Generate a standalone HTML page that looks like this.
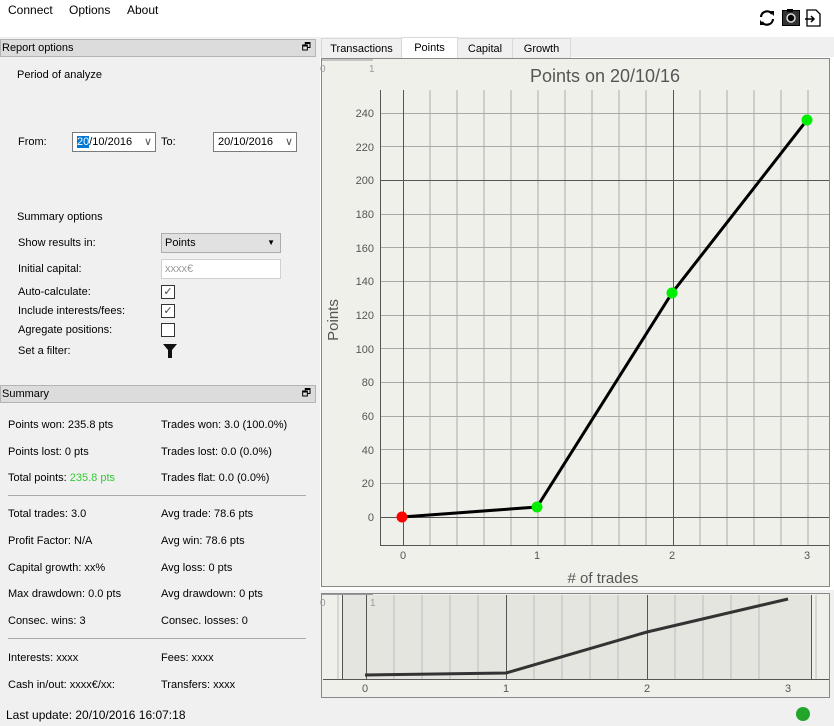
<!DOCTYPE html>
<html><head><meta charset="utf-8"><style>
body{margin:0;width:834px;height:726px;background:#f0f0f0;font-family:"Liberation Sans",sans-serif;font-size:11px;color:#000;position:relative;overflow:hidden}
.a{position:absolute;white-space:nowrap}
.menu{left:0;top:0;width:834px;height:37px;background:#fff}
.hdr{background:#dcdcdc;border:1px solid #b4b4b4;height:16px;line-height:16px;padding-left:1px;width:313px}
.box{background:#fff;border:1px solid #aaa;height:18px;line-height:18px}
.cb{width:12px;height:12px;border:1px solid #333;background:#fff}
.tab{top:38px;height:19px;line-height:20px;text-align:center;border:1px solid #d9d9d9;background:#f0f0f0}
</style></head><body>
<div class="a menu"></div>
<div class="a" style="left:8px;top:3px;font-size:12px">Connect</div>
<div class="a" style="left:69px;top:3px;font-size:12px">Options</div>
<div class="a" style="left:127px;top:3px;font-size:12px">About</div>
<svg class="a" style="left:758px;top:8px" width="70" height="20" viewBox="0 0 70 20">
<path d="M3 9a6 6 0 0 1 11-3M15 11a6 6 0 0 1-11 3" stroke="#000" stroke-width="2.2" fill="none"/>
<path d="M11 3h5v5z M7 17H2v-5z" fill="#000"/>
<rect x="24" y="2" width="18" height="16" fill="#000"/><rect x="25" y="3" width="16" height="14" fill="#333"/><circle cx="33" cy="10" r="4" fill="#000" stroke="#ddd" stroke-width="1.5"/><rect x="29" y="1" width="6" height="3" fill="#000"/>
<path d="M49 2h9l4 4v12h-13z" fill="#fff" stroke="#000" stroke-width="1.3"/><path d="M47 11h9M53 8l3 3-3 3" stroke="#000" stroke-width="1.5" fill="none"/>
</svg>

<div class="a hdr" style="left:0;top:39px">Report options<span style="position:absolute;right:4px;top:0;font-size:10px">&#x1F5D7;</span></div>
<div class="a" style="left:17px;top:69px">Period of analyze</div>
<div class="a" style="left:18px;top:136px">From:</div>
<div class="a box" style="left:72px;top:132px;width:82px;border-color:#7a7a7a"><span style="background:#0078d7;color:#fff;margin-left:4px">20</span>/10/2016<span style="position:absolute;right:3px;color:#555">&#x2228;</span></div>
<div class="a" style="left:161px;top:136px">To:</div>
<div class="a box" style="left:213px;top:132px;width:82px;border-color:#7a7a7a"><span style="margin-left:4px">20/10/2016</span><span style="position:absolute;right:3px;color:#555">&#x2228;</span></div>
<div class="a" style="left:17px;top:211px">Summary options</div>
<div class="a" style="left:18px;top:237px">Show results in:</div>
<div class="a box" style="left:161px;top:233px;width:118px;background:#e1e1e1;border-color:#adadad"><span style="margin-left:3px">Points</span><span style="position:absolute;right:5px;font-size:8px">&#x25BC;</span></div>
<div class="a" style="left:18px;top:263px">Initial capital:</div>
<div class="a box" style="left:161px;top:259px;width:118px;border-color:#d0d0d0;color:#999"><span style="margin-left:3px">xxxx€</span></div>
<div class="a" style="left:18px;top:286px">Auto-calculate:</div>
<div class="a cb" style="left:161px;top:285px;font-size:11px;line-height:12px;text-align:center;color:#444">✓</div>
<div class="a" style="left:18px;top:305px">Include interests/fees:</div>
<div class="a cb" style="left:161px;top:304px;font-size:11px;line-height:12px;text-align:center;color:#444">✓</div>
<div class="a" style="left:18px;top:324px">Agregate positions:</div>
<div class="a cb" style="left:161px;top:323px"></div>
<div class="a" style="left:18px;top:345px">Set a filter:</div>
<svg class="a" style="left:163px;top:343px" width="14" height="16"><path d="M0 1h14l-5 6v8h-4v-8z" fill="#111"/></svg>

<div class="a hdr" style="left:0;top:385px">Summary<span style="position:absolute;right:4px;top:0;font-size:10px">&#x1F5D7;</span></div>
<div class="a" style="left:8px;top:419px">Points won: 235.8 pts</div>
<div class="a" style="left:161px;top:419px">Trades won: 3.0 (100.0%)</div>
<div class="a" style="left:8px;top:446px">Points lost: 0 pts</div>
<div class="a" style="left:161px;top:446px">Trades lost: 0.0 (0.0%)</div>
<div class="a" style="left:8px;top:472px">Total points: <span style="color:#3c3">235.8 pts</span></div>
<div class="a" style="left:161px;top:472px">Trades flat: 0.0 (0.0%)</div>
<div class="a" style="left:8px;top:495px;width:298px;height:1px;background:#aaa"></div>
<div class="a" style="left:8px;top:508px">Total trades: 3.0</div>
<div class="a" style="left:161px;top:508px">Avg trade: 78.6 pts</div>
<div class="a" style="left:8px;top:535px">Profit Factor: N/A</div>
<div class="a" style="left:161px;top:535px">Avg win: 78.6 pts</div>
<div class="a" style="left:8px;top:562px">Capital growth: xx%</div>
<div class="a" style="left:161px;top:562px">Avg loss: 0 pts</div>
<div class="a" style="left:8px;top:588px">Max drawdown: 0.0 pts</div>
<div class="a" style="left:161px;top:588px">Avg drawdown: 0 pts</div>
<div class="a" style="left:8px;top:615px">Consec. wins: 3</div>
<div class="a" style="left:161px;top:615px">Consec. losses: 0</div>
<div class="a" style="left:8px;top:638px;width:298px;height:1px;background:#aaa"></div>
<div class="a" style="left:8px;top:652px">Interests: xxxx</div>
<div class="a" style="left:161px;top:652px">Fees: xxxx</div>
<div class="a" style="left:8px;top:679px">Cash in/out: xxxx€/xx:</div>
<div class="a" style="left:161px;top:679px">Transfers: xxxx</div>
<div class="a" style="left:6px;top:708px;font-size:12px">Last update: 20/10/2016 16:07:18</div>
<div class="a" style="left:796px;top:707px;width:14px;height:14px;border-radius:50%;background:#22a52a"></div>

<div class="a" style="left:320px;top:57px;width:514px;height:533px;background:#fff"></div>
<div class="a tab" style="left:321px;width:79px">Transactions</div>
<div class="a tab" style="left:401px;top:37px;height:21px;width:55px;background:#fff;border-bottom:none">Points</div>
<div class="a tab" style="left:457px;width:54px">Capital</div>
<div class="a tab" style="left:512px;width:57px">Growth</div>

<svg class="a" style="left:0;top:0" width="834" height="726" font-family="Liberation Sans,sans-serif">
<rect x="321.5" y="58.5" width="508" height="528" fill="#f0f0eb" stroke="#888"/>
<text x="320" y="72" font-size="10" fill="#999">0</text><text x="369" y="72" font-size="10" fill="#999">1</text>
<line x1="322" y1="60" x2="373" y2="60" stroke="#999"/>
<text x="605" y="82" font-size="18" fill="#555" text-anchor="middle">Points on 20/10/16</text>
<g stroke="#aaa" stroke-width="1" fill="none">
<path d="M430 90V545M457 90V545M484 90V545M511 90V545M538 90V545M565 90V545M592 90V545M619 90V545M646 90V545M700 90V545M727 90V545M754 90V545M781 90V545M808 90V545"/>
<path d="M380 483.5H829M380 449.5H829M380 416.5H829M380 382.5H829M380 348.5H829M380 315.5H829M380 281.5H829M380 247.5H829M380 214.5H829M380 146.5H829M380 113.5H829"/>
</g>
<g stroke="#555" fill="none"><path d="M403.5 90V545M673.5 90V545M380 517.5H829M380 180.5H829"/><path d="M380.5 90V545.5H829"/></g>
<g font-size="11" fill="#555" text-anchor="end">
<text x="374" y="521">0</text><text x="374" y="487">20</text><text x="374" y="454">40</text><text x="374" y="420">60</text><text x="374" y="386">80</text><text x="374" y="353">100</text><text x="374" y="319">120</text><text x="374" y="285">140</text><text x="374" y="252">160</text><text x="374" y="218">180</text><text x="374" y="184">200</text><text x="374" y="151">220</text><text x="374" y="117">240</text>
</g>
<g font-size="11" fill="#555" text-anchor="middle"><text x="403" y="559">0</text><text x="537" y="559">1</text><text x="672" y="559">2</text><text x="807" y="559">3</text></g>
<text x="603" y="583" font-size="15" fill="#555" text-anchor="middle">#  of trades</text>
<text transform="translate(338 320) rotate(-90)" font-size="15" fill="#555" text-anchor="middle">Points</text>
<polyline points="402,517 537,507 672,293 807,120" fill="none" stroke="#000" stroke-width="3"/>
<circle cx="402" cy="517" r="5.5" fill="#f00"/><circle cx="537" cy="507" r="5.5" fill="#0e0"/><circle cx="672" cy="293" r="5.5" fill="#0e0"/><circle cx="807" cy="120" r="5.5" fill="#0e0"/>

<rect x="321.5" y="593.5" width="508" height="104" fill="#f0f0eb" stroke="#888"/>
<rect x="342" y="595" width="469" height="84" fill="#e5e5e0"/>
<g stroke="#bbb" fill="none"><path d="M338 595V679M394 595V679M422 595V679M450 595V679M478 595V679M534 595V679M562 595V679M590 595V679M618 595V679M675 595V679M703 595V679M731 595V679M759 595V679M816 595V679"/></g>
<g stroke="#555" fill="none"><path d="M342.5 595V679M366.5 595V679M506.5 595V679M647.5 595V679M811.5 595V679M323 679.5H829"/></g>
<line x1="322" y1="594.5" x2="373" y2="594.5" stroke="#999"/>
<text x="320" y="606" font-size="10" fill="#999">0</text><text x="370" y="606" font-size="10" fill="#999">1</text>
<polyline points="365,675 506,673 647,632 788,599" fill="none" stroke="#333" stroke-width="3"/>
<g font-size="11" fill="#555" text-anchor="middle"><text x="365" y="692">0</text><text x="506" y="692">1</text><text x="647" y="692">2</text><text x="788" y="692">3</text></g>
</svg>
</body></html>
